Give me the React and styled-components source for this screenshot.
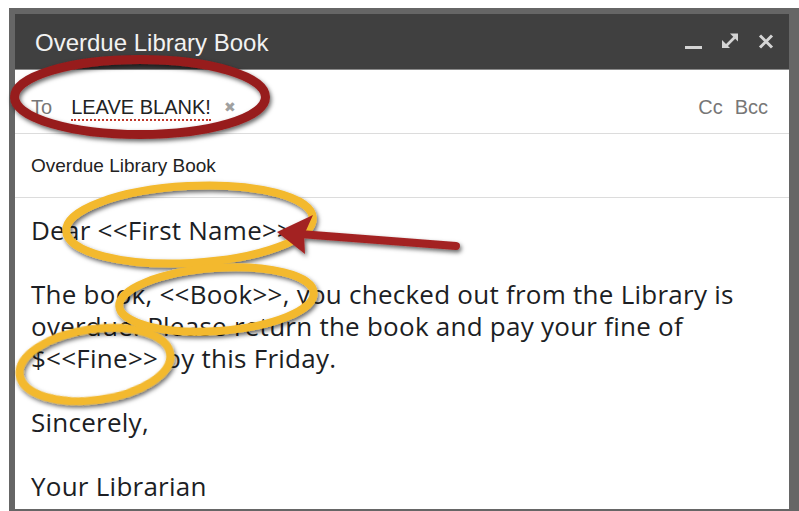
import React from "react";
import styled, { createGlobalStyle } from "styled-components";

const GlobalStyle = createGlobalStyle`
  html, body { margin: 0; padding: 0; background: #ffffff; }
  body { font-family: "Liberation Sans", Arial, sans-serif; }
`;

const Page = styled.div`
  position: relative;
  width: 799px;
  height: 511px;
  overflow: hidden;
  padding: 8px 0 0 9px;
  box-sizing: border-box;
`;

const Frame = styled.div`
  width: 790px;
  background: #666666;
  padding: 6px 10px 2px 6px;
  box-sizing: border-box;
`;

const Compose = styled.div`
  height: 495px;
  background: #ffffff;
  display: flex;
  flex-direction: column;
`;

const TitleBar = styled.div`
  height: 56px;
  flex: none;
  background: #404040;
  border-bottom: 1px solid #8a8a8a;
  box-sizing: border-box;
  display: flex;
  align-items: center;
  padding: 0 14px 0 20px;
`;

const Title = styled.div`
  flex: 1;
  color: #f2f2f2;
  font-size: 24px;
  line-height: 28px;
  padding-top: 2px;
`;

const WindowButtons = styled.div`
  display: flex;
  align-items: center;
  gap: 18px;
`;

const WindowButton = styled.svg`
  display: block;
  width: 18px;
  height: 18px;
  color: #d4d4d4;
`;

const FieldRow = styled.div`
  height: 64px;
  flex: none;
  box-sizing: border-box;
  border-bottom: 1px solid #dcdcdc;
  display: flex;
  align-items: ${(p) => (p.$top ? "flex-start" : "center")};
  padding: ${(p) => (p.$top ? "25px 21px 0 16px" : "0 16px")};
`;

const Label = styled.span`
  color: #777777;
  font-size: 20px;
  line-height: 24px;
  margin-right: ${(p) => p.$gap || 0}px;
`;

const Recipient = styled.span`
  color: #222222;
  font-size: 20px;
  line-height: 24px;
  margin-left: -3px;
  border-bottom: 2px dotted #c0392b;
`;

const Remove = styled.span`
  color: #a0a0a0;
  font-size: 14px;
  line-height: 24px;
  margin-left: 13px;
`;

const Spacer = styled.div`
  flex: 1;
`;

const Subject = styled.span`
  color: #222222;
  font-size: 19px;
  line-height: 24px;
  padding-top: 1px;
`;

const Body = styled.div`
  flex: 1;
  padding: 16px 16px 0 16px;
  font-family: "Open Sans", "Noto Sans", sans-serif;
  font-size: 26px;
  letter-spacing: 0.25px;
  line-height: 32px;
  color: #1c1e24;
`;

const Paragraph = styled.p`
  margin: 0 0 32px 0;
  white-space: nowrap;
`;

const Overlay = styled.svg`
  position: absolute;
  left: 0;
  top: 0;
  width: 799px;
  height: 511px;
  pointer-events: none;
`;

function Minimize() {
  return (
    <WindowButton viewBox="0 0 18 18">
      <rect x="0" y="13" width="17" height="3" fill="currentColor" />
    </WindowButton>
  );
}

function Expand() {
  return (
    <WindowButton viewBox="0 0 18 18">
      <path d="M4.5 13.5 L13.5 4.5" stroke="currentColor" strokeWidth="2.6" />
      <path d="M9 0.5 H17 V8.5 Z" fill="currentColor" />
      <path d="M1 7 V15 H9 Z" fill="currentColor" />
    </WindowButton>
  );
}

function Close() {
  return (
    <WindowButton viewBox="0 0 18 18">
      <path
        d="M3 2.5 L15 14.5 M15 2.5 L3 14.5"
        stroke="currentColor"
        strokeWidth="3"
      />
    </WindowButton>
  );
}

function Markup() {
  return (
    <Overlay viewBox="0 0 799 511">
      <defs>
        <filter id="ink" x="-20%" y="-40%" width="140%" height="180%">
          <feDropShadow dx="1.5" dy="2.5" stdDeviation="2" floodColor="#000" floodOpacity="0.6" />
        </filter>
      </defs>
      <g filter="url(#ink)" fill="none">
        <ellipse cx="140" cy="97" rx="125.5" ry="37.5" stroke="#971d1d" strokeWidth="9" />
        <ellipse
          cx="189.5"
          cy="224.5"
          rx="123.5"
          ry="38.5"
          stroke="#f3b92f"
          strokeWidth="8"
          transform="rotate(-3 189.5 224.5)"
        />
        <ellipse
          cx="216.5"
          cy="299.5"
          rx="97.5"
          ry="31.5"
          stroke="#f3b92f"
          strokeWidth="8"
          transform="rotate(-4 216.5 299.5)"
        />
        <ellipse
          cx="95"
          cy="364.5"
          rx="76"
          ry="35.5"
          stroke="#f3b92f"
          strokeWidth="8"
          transform="rotate(-8 95 364.5)"
        />
        <path d="M456 246 L300 234" stroke="#a32323" strokeWidth="8" strokeLinecap="round" />
        <path d="M277 232 L313 215 L304 235 L305 254 Z" fill="#a32323" />
      </g>
    </Overlay>
  );
}

export default function App() {
  return (
    <>
      <GlobalStyle />
      <Page>
        <Frame>
          <Compose>
            <TitleBar>
              <Title>Overdue Library Book</Title>
              <WindowButtons>
                <Minimize />
                <Expand />
                <Close />
              </WindowButtons>
            </TitleBar>
            <FieldRow $top>
              <Label $gap={22}>To</Label>
              <Recipient>LEAVE BLANK!</Recipient>
              <Remove>✖</Remove>
              <Spacer />
              <Label $gap={12}>Cc</Label>
              <Label>Bcc</Label>
            </FieldRow>
            <FieldRow>
              <Subject>Overdue Library Book</Subject>
            </FieldRow>
            <Body>
              <Paragraph>Dear &lt;&lt;First Name&gt;&gt;</Paragraph>
              <Paragraph>
                The book, &lt;&lt;Book&gt;&gt;, you checked out from the Library is
                <br />
                overdue. Please return the book and pay your fine of
                <br />
                $&lt;&lt;Fine&gt;&gt; by this Friday.
              </Paragraph>
              <Paragraph>Sincerely,</Paragraph>
              <Paragraph>Your Librarian</Paragraph>
            </Body>
          </Compose>
        </Frame>
        <Markup />
      </Page>
    </>
  );
}
